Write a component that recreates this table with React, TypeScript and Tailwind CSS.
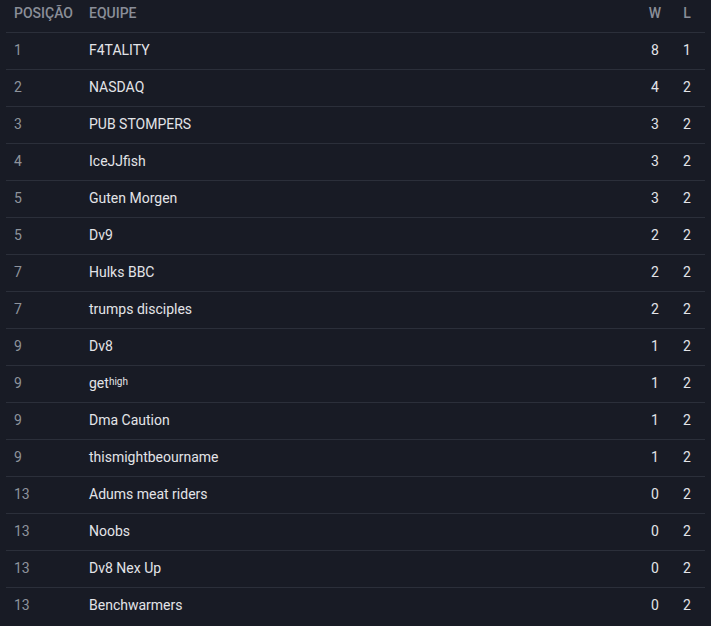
import React from 'react';

interface Standing {
  pos: number;
  team: React.ReactNode;
  w: number;
  l: number;
}

const standings: Standing[] = [
  { pos: 1, team: 'F4TALITY', w: 8, l: 1 },
  { pos: 2, team: 'NASDAQ', w: 4, l: 2 },
  { pos: 3, team: 'PUB STOMPERS', w: 3, l: 2 },
  { pos: 4, team: 'IceJJfish', w: 3, l: 2 },
  { pos: 5, team: 'Guten Morgen', w: 3, l: 2 },
  { pos: 5, team: 'Dv9', w: 2, l: 2 },
  { pos: 7, team: 'Hulks BBC', w: 2, l: 2 },
  { pos: 7, team: 'trumps disciples', w: 2, l: 2 },
  { pos: 9, team: 'Dv8', w: 1, l: 2 },
  {
    pos: 9,
    team: (
      <>
        get<sup className="relative -top-[3px] text-[10px]">high</sup>
      </>
    ),
    w: 1,
    l: 2
  },
  { pos: 9, team: 'Dma Caution', w: 1, l: 2 },
  { pos: 9, team: 'thismightbeourname', w: 1, l: 2 },
  { pos: 13, team: 'Adums meat riders', w: 0, l: 2 },
  { pos: 13, team: 'Noobs', w: 0, l: 2 },
  { pos: 13, team: 'Dv8 Nex Up', w: 0, l: 2 },
  { pos: 13, team: 'Benchwarmers', w: 0, l: 2 }
];

const cols = 'grid grid-cols-[75px_1fr_32px_32px] pl-2 pr-[2px]';

export default function App() {
  return (
    <div
      className="min-h-screen w-full bg-[#181b25] px-[6px] text-[14px]"
      style={{ fontFamily: 'Roboto, "Liberation Sans", sans-serif' }}
    >
      <div className={`${cols} h-[33px] items-center border-b border-[#2b2f3a] pb-[5px] font-medium uppercase text-[#8a8e98]`}>
        <span>Posição</span>
        <span>Equipe</span>
        <span className="text-center">W</span>
        <span className="text-center">L</span>
      </div>

      {standings.map((row, i) => (
        <div
          key={i}
          className={`${cols} h-[37px] items-center border-b border-[#2b2f3a] pb-[2px] last:border-b-0`}
        >
          <span className="text-[#8e939c]">{row.pos}</span>
          <span className="text-[#e3e4e8]">{row.team}</span>
          <span className="text-center text-[#e3e4e8]">{row.w}</span>
          <span className="text-center text-[#e3e4e8]">{row.l}</span>
        </div>
      ))}
    </div>
  );
}
